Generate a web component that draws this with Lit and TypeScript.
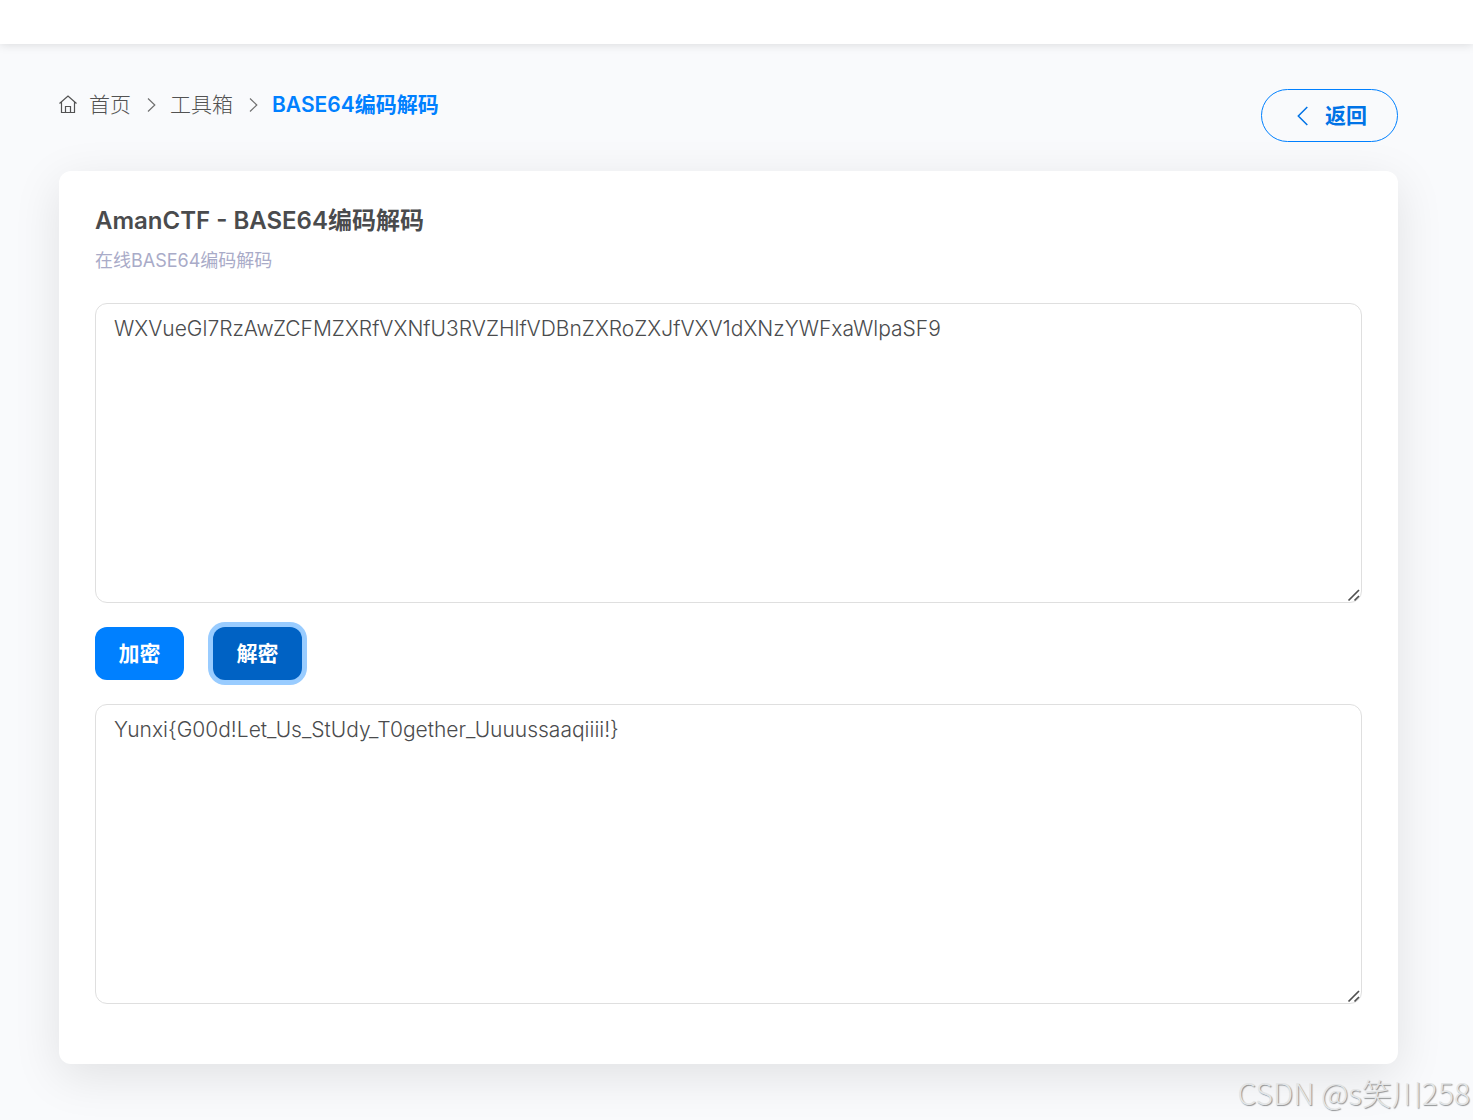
import { LitElement, html, css } from "lit";
import { customElement, state } from "lit/decorators.js";

@customElement("app-root")
export class AppRoot extends LitElement {
  @state() private source = "WXVueGl7RzAwZCFMZXRfVXNfU3RVZHlfVDBnZXRoZXJfVXV1dXNzYWFxaWlpaSF9";
  @state() private result = "Yunxi{G00d!Let_Us_StUdy_T0gether_Uuuussaaqiiii!}";
  @state() private active: "encode" | "decode" = "decode";

  static styles = css`
    :host {
      display: flex;
      flex-direction: column;
      position: relative;
      min-height: 100vh;
      overflow: hidden;
      box-sizing: border-box;
      background: #f9fafc;
      color: #4a4b4d;
      font-family: Inter, "Noto Sans CJK SC", sans-serif;
      font-size: 21px;
      line-height: 32px;
    }
    * {
      box-sizing: border-box;
    }
    .topbar {
      height: 44px;
      background: #fff;
      box-shadow: 0 0 10px rgba(0, 0, 0, 0.15);
    }
    .page {
      display: flex;
      flex-direction: column;
      gap: 29px;
      padding: 45px 75px 56px 59px;
    }
    .head {
      display: flex;
      justify-content: space-between;
      align-items: flex-start;
    }
    .crumbs {
      display: flex;
      align-items: center;
      margin: 0;
      padding: 0;
      list-style: none;
      color: #525252;
    }
    .crumbs li {
      display: flex;
      align-items: center;
    }
    .crumbs a {
      display: flex;
      align-items: center;
      gap: 12px;
      color: inherit;
      font-weight: 300;
      text-decoration: none;
    }
    .crumbs .current {
      color: #0080ff;
      font-weight: 600;
    }
    .current b {
      font-weight: 700;
    }
    .home {
      width: 18px;
      height: 20px;
    }
    .sep {
      width: 9px;
      height: 16px;
      margin: 0 14px 0 16px;
      color: #707070;
    }
    svg {
      display: block;
      fill: none;
      stroke: currentColor;
    }
    .back {
      display: flex;
      align-items: center;
      gap: 17px;
      height: 53px;
      padding: 0 30px 0 35px;
      border: 1px solid #0080ff;
      border-radius: 27px;
      color: #0073e6;
      font-weight: 700;
      text-decoration: none;
    }
    .back svg {
      width: 11px;
      height: 20px;
    }
    .card {
      display: flex;
      flex-direction: column;
      padding: 32px 36px 60px;
      border-radius: 12px;
      background: #fff;
      box-shadow: 0 12px 48px rgba(0, 0, 0, 0.1);
    }
    h1 {
      margin: 0;
      font-size: 24px;
      font-weight: 600;
      line-height: 36px;
    }
    h1 b {
      font-weight: 700;
    }
    .sub {
      margin: 8px 0 29px;
      color: #a9abc8;
      font-size: 18px;
      line-height: 27px;
    }
    .field {
      position: relative;
    }
    textarea {
      display: block;
      width: 100%;
      height: 300px;
      margin: 0;
      padding: 9px 18px;
      border: 1px solid #dfdfdf;
      border-radius: 12px;
      outline: none;
      resize: vertical;
      background: #fff;
      color: #4a4b4d;
      font: inherit;
      font-weight: 350;
    }
    textarea::-webkit-resizer {
      background: transparent;
    }
    .grip {
      position: absolute;
      right: 2px;
      bottom: 1px;
      width: 13px;
      height: 13px;
      color: #505050;
      pointer-events: none;
    }
    .actions {
      display: flex;
      gap: 29px;
      margin: 24px 0;
    }
    button {
      min-width: 89px;
      height: 53px;
      padding: 0 23px;
      border: 0;
      border-radius: 12px;
      outline: none;
      background: #0080ff;
      color: #fff;
      font: inherit;
      font-weight: 700;
      cursor: pointer;
    }
    button.pressed {
      background: #0062c4;
      box-shadow: 0 0 0 5px #99ccff;
    }
    .mark {
      position: absolute;
      right: 3px;
      bottom: 8px;
      color: #e3e5e6;
      font-family: "Noto Sans CJK SC", sans-serif;
      font-size: 30px;
      font-weight: 300;
      line-height: 40px;
      text-shadow: 1px 1px 1px #8f9193;
      pointer-events: none;
    }
  `;

  private encode() {
    this.active = "encode";
    this.result = btoa(String.fromCharCode(...new TextEncoder().encode(this.source)));
  }

  private decode() {
    this.active = "decode";
    try {
      const bytes = Uint8Array.from(atob(this.source), (c) => c.charCodeAt(0));
      this.result = new TextDecoder().decode(bytes);
    } catch {
      this.result = "";
    }
  }

  private separator() {
    return html`<svg class="sep" viewBox="0 0 9 16" stroke-width="1.2" aria-hidden="true"><path d="M1 1.5 7.8 8 1 14.5" /></svg>`;
  }

  private grip() {
    return html`<svg class="grip" viewBox="0 0 13 13" stroke-width="1.7" aria-hidden="true"><path d="M1.500 11.500 12 1M7.500 11.500 12 7" /></svg>`;
  }

  render() {
    return html`
      <header class="topbar"></header>
      <main class="page">
        <div class="head">
          <nav>
            <ol class="crumbs">
              <li>
                <a href="#">
                  <svg class="home" viewBox="0 0 18 20" stroke-width="1.2" aria-hidden="true">
                    <path d="M.5 8.500 9 1l8.500 7.500M2.500 7v10.500h13V7M6.500 17.500v-6h5v6" />
                  </svg>
                  首页
                </a>
                ${this.separator()}
              </li>
              <li><a href="#">工具箱</a>${this.separator()}</li>
              <li class="current" aria-current="page"><span>BASE64<b>编码解码</b></span></li>
            </ol>
          </nav>
          <a class="back" href="#">
            <svg viewBox="0 0 11 20" stroke-width="1.5" aria-hidden="true"><path d="M10.300 1 1.300 10l9 9" /></svg>
            返回
          </a>
        </div>
        <section class="card">
          <h1>AmanCTF - BASE64<b>编码解码</b></h1>
          <p class="sub">在线BASE64编码解码</p>
          <div class="field">
            <textarea
              aria-label="Input"
              spellcheck="false"
              .value=${this.source}
              @input=${(e: Event) => (this.source = (e.target as HTMLTextAreaElement).value)}
            ></textarea>
            ${this.grip()}
          </div>
          <div class="actions">
            <button type="button" class=${this.active === "encode" ? "pressed" : ""} @click=${this.encode}>加密</button>
            <button type="button" class=${this.active === "decode" ? "pressed" : ""} @click=${this.decode}>解密</button>
          </div>
          <div class="field">
            <textarea aria-label="Output" spellcheck="false" .value=${this.result}></textarea>
            ${this.grip()}
          </div>
        </section>
      </main>
      <div class="mark">CSDN @s笑川258</div>
    `;
  }
}
